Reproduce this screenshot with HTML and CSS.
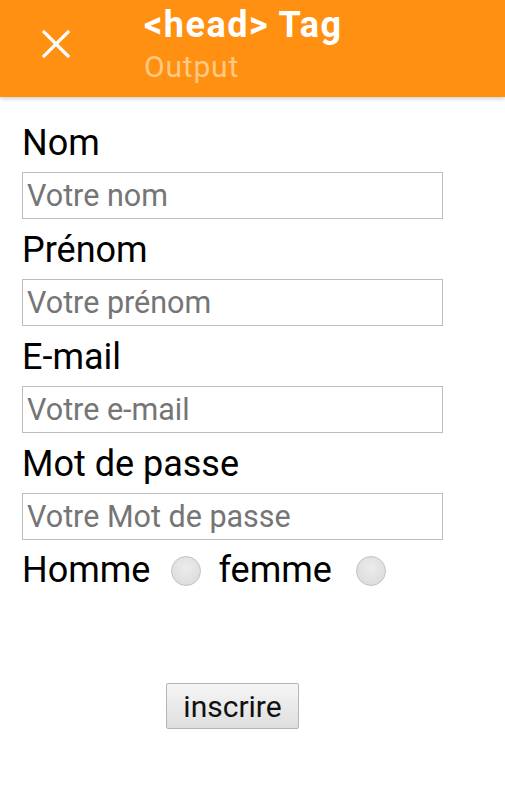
FILE: index.html
```html
<!DOCTYPE html>
<html>
<head>
<meta charset="utf-8">
<link rel="stylesheet" href="styles.css">
</head>
<body>
<header class="appbar">
  <div class="close">
    <svg width="28" height="28" viewBox="0 0 28 28"><path d="M2 2 L26 26 M26 2 L2 26" stroke="#fff" stroke-width="3.2" stroke-linecap="square"/></svg>
  </div>
  <div class="titles">
    <div class="title">&lt;head&gt; Tag</div>
    <div class="subtitle">Output</div>
  </div>
</header>
<form class="form">
  <label class="label">Nom</label>
  <input class="field" type="text" placeholder="Votre nom">
  <label class="label">Prénom</label>
  <input class="field" type="text" placeholder="Votre prénom">
  <label class="label">E-mail</label>
  <input class="field" type="text" placeholder="Votre e-mail">
  <label class="label">Mot de passe</label>
  <input class="field" type="text" placeholder="Votre Mot de passe">
  <div class="gender">
    <span>Homme</span><span class="radio"></span>
    <span>femme</span><span class="radio radio-last"></span>
  </div>
  <div class="submit-row">
    <button class="btn" type="button">inscrire</button>
  </div>
</form>
</body>
</html>
```
FILE: styles.css
```css
html, body { margin: 0; padding: 0; background: #fff; }
body { font-family: Roboto, "Noto Sans", sans-serif; width: 505px; height: 786px; overflow: hidden; }
.appbar {
  height: 97px;
  background: #ff9011;
  display: flex;
  align-items: flex-start;
  box-shadow: 0 2px 4px rgba(0,0,0,0.18);
  position: relative;
}
.close { width: 28px; height: 28px; margin: 30px 0 0 42px; }
.close svg { display: block; }
.titles { margin-left: 74px; padding-top: 4px; }
.title { color: #fff; font-weight: bold; font-size: 36px; line-height: 42px; letter-spacing: 1.5px; }
.subtitle { color: #ffc884; font-size: 30px; line-height: 36px; margin-top: 3px; letter-spacing: 0.8px; }
.form { padding: 26px 22px 0 22px; display: flex; flex-direction: column; align-items: flex-start; }
.label { font-size: 36px; line-height: 41px; color: #000; display: block; height: 49px; }
.field {
  box-sizing: border-box;
  width: 421px; height: 47px;
  border: 1px solid #bdbdbd;
  padding: 0 4px;
  font-family: Roboto, sans-serif;
  font-size: 30.5px;
  margin: 0 0 11px 0;
  outline: none;
  background: #fff;
}
.field::placeholder { color: #757575; }
.gender { display: flex; align-items: center; font-size: 36px; line-height: 41px; height: 41px; margin-top: -1px; }
.radio {
  width: 30px; height: 30px; border-radius: 50%;
  border: 1px solid #c2c2c2;
  background: radial-gradient(circle at 50% 40%, #ececec, #d8d8d8);
  margin: 0 17px 0 21px;
  box-sizing: border-box;
}
.radio-last { margin-left: 24px; }
.submit-row { width: 421px; display: flex; justify-content: center; margin-top: 92px; }
.btn {
  font-family: Roboto, sans-serif; font-size: 30px;
  height: 46px; padding: 0 16px;
  border: 1px solid #b5b5b5; border-radius: 2px;
  background: linear-gradient(#f6f6f6, #dedede);
  color: #111;
}
```
